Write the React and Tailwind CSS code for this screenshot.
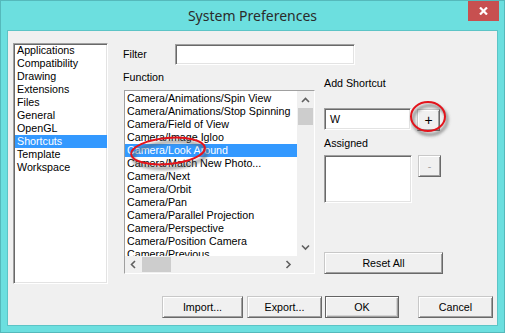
import React from "react";

const leftItems = ["Applications","Compatibility","Drawing","Extensions","Files","General","OpenGL","Shortcuts","Template","Workspace"];
const funcItems = [
  "Camera/Animations/Spin View",
  "Camera/Animations/Stop Spinning",
  "Camera/Field of View",
  "Camera/Image Igloo",
  "Camera/Look Around",
  "Camera/Match New Photo...",
  "Camera/Next",
  "Camera/Orbit",
  "Camera/Pan",
  "Camera/Parallel Projection",
  "Camera/Perspective",
  "Camera/Position Camera",
  "Camera/Previous",
];

const sunken = "border border-t-[#a0a0a0] border-l-[#a0a0a0] border-r-white border-b-white shadow-[inset_1px_1px_0_#696969,inset_-1px_-1px_0_#e3e3e3] bg-white";
const btn = "flex items-center justify-center h-[22px] bg-[#f0f0f0] border border-t-[#c8c8c8] border-l-[#c8c8c8] border-r-[#696969] border-b-[#696969] shadow-[inset_1px_1px_0_#ffffff,inset_-1px_-1px_0_#a0a0a0] text-black";
const btnDefault = "flex items-center justify-center h-[22px] bg-[#f0f0f0] border border-[#646464] shadow-[inset_1px_1px_0_#ffffff,inset_-1px_-1px_0_#a0a0a0,inset_-2px_-2px_0_#d4d4d4] text-black";

function Chevron({ dir }) {
  const pts = {
    up: "1,5 4.5,1.5 8,5",
    down: "1,1.5 4.5,5 8,1.5",
    left: "5,1 1.5,4.5 5,8",
    right: "1.5,1 5,4.5 1.5,8",
  }[dir];
  const vert = dir === "up" || dir === "down";
  return (
    <svg width={vert ? 9 : 7} height={vert ? 7 : 9} viewBox={vert ? "0 0 9 7" : "0 0 7 9"}>
      <polyline points={pts} fill="none" stroke="#606060" strokeWidth="1.6" />
    </svg>
  );
}

export default function App() {
  return (
    <div
      className="relative w-[505px] h-[333px] bg-[#6cdfdf] border border-[#55b9bb] flex flex-col text-[10.7px] leading-[13px] text-black"
      style={{ fontFamily: '"Liberation Sans", Arial, sans-serif' }}
    >
      {/* Title bar */}
      <div className="h-[29px] grid grid-cols-[1fr_auto_1fr]">
        <div />
        <div
          className="self-center text-[14px] leading-[18px] text-[#2b2b2b] pt-[1px]"
          style={{ fontFamily: '"Noto Sans", "Open Sans", sans-serif' }}
        >
          System Preferences
        </div>
        <div className="flex justify-end items-start pr-[5px]">
          <div className="w-[31px] h-[20px] bg-[#c75050] flex items-center justify-center">
            <svg width="9" height="8" viewBox="0 0 9 8">
              <path d="M1 0.5 L8 7.5 M8 0.5 L1 7.5" stroke="white" strokeWidth="2.2" />
            </svg>
          </div>
        </div>
      </div>

      {/* Content */}
      <div className="mx-[6px] border border-[#5cc4c6] bg-[#f0f0f0] h-[296px] flex flex-col pl-[5px] pt-[12px]">
        <div className="flex items-start">
          {/* Left list */}
          <div className={`w-[95px] h-[241px] shrink-0 pl-[1px] ${sunken}`}>
            {leftItems.map((t) => (
              <div
                key={t}
                className={`h-[13px] pl-[2px] whitespace-nowrap ${t === "Shortcuts" ? "bg-[#3399ff] text-white" : ""}`}
              >
                {t}
              </div>
            ))}
          </div>

          {/* Middle + right */}
          <div className="ml-[15px] flex flex-col">
            <div className="flex items-center mt-[1px]">
              <div className="w-[52px]">Filter</div>
              <div className={`w-[180px] h-[21px] ${sunken}`} />
            </div>
            <div className="flex items-start">
              <div className="w-[192px] flex flex-col">
                <div className="mt-[6px]">Function</div>
                <div className={`ml-[1px] mt-[6px] w-[191px] h-[184px] ${sunken} grid grid-cols-[172px_17px] grid-rows-[165px_17px]`}>
                  <div className="pt-[1px] overflow-hidden bg-white">
                    {funcItems.map((t) => (
                      <div
                        key={t}
                        className={`h-[13px] pl-[2px] whitespace-nowrap ${t === "Camera/Look Around" ? "bg-[#3399ff] text-white" : ""}`}
                      >
                        {t}
                      </div>
                    ))}
                  </div>
                  <div className="bg-[#f0f0f0] flex flex-col">
                    <div className="h-[17px] flex items-center justify-center pt-[1px]">
                      <Chevron dir="up" />
                    </div>
                    <div className="h-[17px] mx-[1px] bg-[#cdcdcd]" />
                    <div className="flex-1" />
                    <div className="h-[17px] flex items-center justify-center">
                      <Chevron dir="down" />
                    </div>
                  </div>
                  <div className="bg-[#f0f0f0] flex items-stretch">
                    <div className="w-[17px] flex items-center justify-center">
                      <Chevron dir="left" />
                    </div>
                    <div className="w-[29px] my-[1px] bg-[#cdcdcd]" />
                    <div className="flex-1" />
                    <div className="w-[17px] flex items-center justify-center">
                      <Chevron dir="right" />
                    </div>
                  </div>
                  <div className="bg-[#f0f0f0]" />
                </div>
              </div>

              {/* Right column */}
              <div className="ml-[9px] flex flex-col">
                <div className="mt-[12px]">Add Shortcut</div>
                <div className="flex items-start mt-[18px]">
                  <div className={`w-[87px] h-[22px] ${sunken} flex items-center pl-[5px]`}>W</div>
                  <div className={`ml-[6px] mt-[1px] w-[23px] ${btn} text-[14px]`}>+</div>
                </div>
                <div className="mt-[6px]">Assigned</div>
                <div className="flex items-start mt-[5px]">
                  <div className={`w-[88px] h-[48px] ${sunken}`} />
                  <div className={`ml-[6px] w-[23px] ${btn} !text-[#a0a0a0]`}>-</div>
                </div>
                <div className={`mt-[49px] w-[119px] ${btn}`}>Reset All</div>
              </div>
            </div>
          </div>
        </div>

        {/* Bottom buttons */}
        <div className="flex mt-[12px] ml-[149px]">
          <div className={`w-[81px] ${btn}`}>Import...</div>
          <div className={`ml-[4px] w-[75px] ${btn}`}>Export...</div>
          <div className={`ml-[3px] w-[74px] ${btnDefault}`}>OK</div>
          <div className={`ml-[19px] w-[75px] ${btn}`}>Cancel</div>
        </div>
      </div>

      {/* Red annotation circles */}
      <svg className="absolute left-[-1px] top-[-1px] pointer-events-none" width="505" height="333" viewBox="0 0 505 333">
        <defs>
          <filter id="blur" x="-20%" y="-20%" width="140%" height="140%">
            <feGaussianBlur stdDeviation="1.5" />
          </filter>
        </defs>
        <ellipse cx="170" cy="155" rx="37" ry="13" transform="rotate(-5 170 155)" fill="none" stroke="#555" strokeOpacity="0.6" strokeWidth="3" filter="url(#blur)" />
        <ellipse cx="168" cy="151" rx="37" ry="13" transform="rotate(-5 168 151)" fill="none" stroke="#e3141c" strokeWidth="2" />
        <ellipse cx="430" cy="120" rx="17" ry="14.5" fill="none" stroke="#555" strokeOpacity="0.6" strokeWidth="3" filter="url(#blur)" />
        <ellipse cx="428" cy="116.5" rx="17" ry="14.5" fill="none" stroke="#e3141c" strokeWidth="2" />
      </svg>
    </div>
  );
}
